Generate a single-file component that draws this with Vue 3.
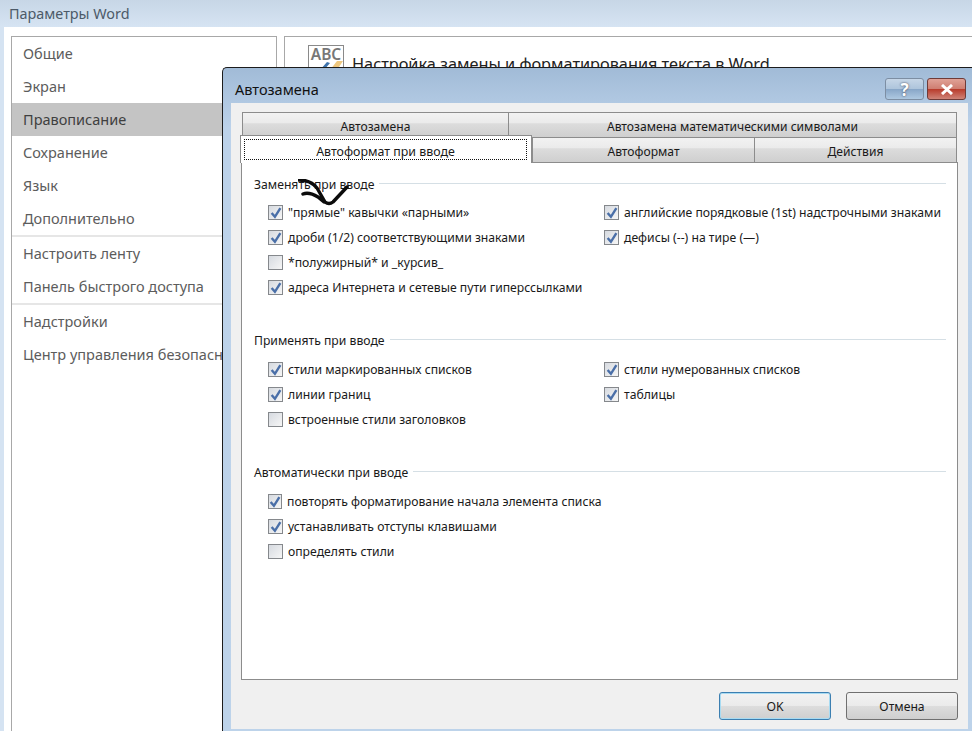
<script setup>
const nav = [
  { items: [
    { t: 'Общие' }, { t: 'Экран' }, { t: 'Правописание', active: true },
    { t: 'Сохранение' }, { t: 'Язык' }, { t: 'Дополнительно' },
  ] },
  { items: [{ t: 'Настроить ленту' }, { t: 'Панель быстрого доступа' }] },
  { items: [{ t: 'Надстройки' }, { t: 'Центр управления безопасностью' }] },
]
const groups = [
  { title: 'Заменять при вводе', left: [
    ['"прямые" кавычки «парными»', true],
    ['дроби (1/2) соответствующими знаками', true],
    ['*полужирный* и _курсив_', false],
    ['адреса Интернета и сетевые пути гиперссылками', true],
  ], right: [
    ['английские порядковые (1st) надстрочными знаками', true],
    ['дефисы (--) на тире (—)', true],
  ] },
  { title: 'Применять при вводе', left: [
    ['стили маркированных списков', true],
    ['линии границ', true],
    ['встроенные стили заголовков', false],
  ], right: [
    ['стили нумерованных списков', true],
    ['таблицы', true],
  ] },
  { title: 'Автоматически при вводе', left: [
    ['повторять форматирование начала элемента списка', true],
    ['устанавливать отступы клавишами', true],
    ['определять стили', false],
  ], right: [] },
]
</script>

<template>
  <div class="word">
    <header class="word-title">Параметры Word</header>
    <div class="word-body">
      <nav class="nav">
        <div v-for="(g, i) in nav" :key="i" class="nav-group">
          <div v-for="it in g.items" :key="it.t" class="nav-item" :class="{ active: it.active }">{{ it.t }}</div>
        </div>
      </nav>
      <main class="pane">
        <div class="abc"><span>ABC</span>
          <svg width="34" height="12" viewBox="0 0 34 12"><path d="M6 10l3 2M10 12L17 4l3 1-6 7z" fill="#3f74ad"/><path d="M20 12l7-9h6l-6 9z" fill="#eec77e"/></svg>
        </div>
        <div class="pane-title">Настройка замены и форматирования текста в Word</div>
      </main>
    </div>

    <section class="dialog">
      <header class="dlg-title">
        <span>Автозамена</span>
        <div class="dlg-btns">
          <button class="cap help">?</button>
          <button class="cap close">
            <svg width="14" height="11" viewBox="0 0 14 11"><path d="M2 1l10 9M12 1L2 10" stroke="#fff" stroke-width="3" fill="none"/></svg>
          </button>
        </div>
      </header>
      <div class="client">
        <div class="tabs">
          <div class="tab-row first">
            <div class="tab t-a">Автозамена</div>
            <div class="tab t-b">Автозамена математическими символами</div>
          </div>
          <div class="tab-row second">
            <div class="tab active-tab"><span class="focus">Автоформат при вводе</span></div>
            <div class="tab t-c">Автоформат</div>
            <div class="tab t-d">Действия</div>
          </div>
        </div>
        <div class="panel">
          <div v-for="g in groups" :key="g.title" class="group">
            <div class="legend"><span>{{ g.title }}</span><i></i></div>
            <div class="cols">
              <div class="col">
                <label v-for="o in g.left" :key="o[0]" class="opt">
                  <span class="box"><svg v-if="o[1]" width="12" height="12" viewBox="0 0 11 11"><path d="M1.5 5.5L4.5 9 9.5 1" stroke="#4a6fa8" stroke-width="2.2" fill="none"/></svg></span>{{ o[0] }}
                </label>
              </div>
              <div class="col right">
                <label v-for="o in g.right" :key="o[0]" class="opt">
                  <span class="box"><svg v-if="o[1]" width="12" height="12" viewBox="0 0 11 11"><path d="M1.5 5.5L4.5 9 9.5 1" stroke="#4a6fa8" stroke-width="2.2" fill="none"/></svg></span>{{ o[0] }}
                </label>
              </div>
            </div>
          </div>
        </div>
        <div class="actions">
          <button class="btn ok">OK</button>
          <button class="btn">Отмена</button>
        </div>
      </div>
    </section>

    <svg class="scribble" width="60" height="34" viewBox="0 0 60 34">
      <path d="M1 1C8 1 15 4 19 9L27 23Q31 26 35 23L49 8M5 15C10 13 15 15 20 18L26 23" stroke="#0b0b0b" stroke-width="3.4" fill="none" stroke-linecap="round" stroke-linejoin="round"/>
    </svg>
  </div>
</template>

<style>
html, body { margin: 0; background: #fff; }
</style>

<style scoped>
.word {
  position: relative; width: 972px; height: 731px; overflow: hidden;
  background: #d5e3f2; font-family: "Noto Sans", "Open Sans", sans-serif;
  display: flex; flex-direction: column;
}
.word-title {
  height: 27px; line-height: 28px; padding-left: 9px; font-size: 14.4px; color: #4c5a68;
  background: linear-gradient(#c7d6e6, #d6e4f3);
}
.word-body {
  flex: 1; background: #fff; margin-left: 4px; padding: 9px 0 0 7px;
  display: flex; gap: 7px; min-height: 0;
}
.nav { width: 264px; border: 1px solid #a8a8a8; border-bottom: 0; }
.nav-group + .nav-group { border-top: 2px solid #e6e6e6; }
.nav-item {
  height: 33px; line-height: 33px; padding-left: 11px; font-size: 14.5px; color: #5c5c5c; white-space: nowrap;
}
.nav-item.active { background: #c4c4c4; color: #3f3f3f; }
.pane { flex: 1; border: 1px solid #a8a8a8; border-right: 0; border-bottom: 0; position: relative; padding: 8px 0 0 23px; display: flex; gap: 8px; }
.abc { width: 34px; height: 21px; border: 1px solid #8a8a8a; position: relative; box-sizing: content-box; flex: none; }
.abc span { display: block; font-size: 15.5px; line-height: 17px; font-weight: 600; color: #777; text-align: center; }
.abc svg { position: absolute; left: 1px; top: 12px; }
.pane-title { font-size: 16.3px; color: #222; margin-top: 8px; white-space: nowrap; }

.dialog {
  position: absolute; left: 222px; top: 67px; width: 760px; height: 670px;
  border: 1px solid #1c1c1c; border-radius: 5px 0 0 0; border-right: 0;
  background: linear-gradient(#a1bbd7 0, #bcd2ea 60px, #bdd3ea 100%);
  box-sizing: border-box;
}
.dlg-title {
  height: 35px; padding: 0 4px 0 12px; display: flex; align-items: center; justify-content: space-between;
  font-size: 14.5px; color: #111; position: relative; width: 734px;
}
.dlg-title > span { margin-top: 7px; }
.dlg-btns { position: absolute; right: 7px; top: 10px; display: flex; gap: 3px; }
.cap { height: 22px; padding: 0; border-radius: 3px; display: flex; align-items: center; justify-content: center; box-sizing: border-box; }
.help {
  width: 39px; border: 1px solid #7d8ea3; color: #fff; font: 700 17px "Noto Sans", sans-serif;
  background: linear-gradient(#c6d6e7 0, #aec5dc 48%, #87a5c7 50%, #aec8e1 100%);
  text-shadow: 0 0 2px #334;
}
.close {
  width: 39px; border: 1px solid #6f3b38;
  background: linear-gradient(#e0a297 0, #cf7f72 48%, #b83a2a 50%, #cf8478 100%);
}
.client {
  position: absolute; left: 8px; top: 35px; width: 737px; height: 626px; background: #f0f0f0;
  padding: 9px 0 0 10px; box-sizing: border-box;
}
.tabs { width: 715px; margin-left: 1px; }
.tab-row { display: flex; height: 25px; }
.tab {
  box-sizing: border-box; height: 25px; line-height: 27px; text-align: center; font-size: 12.1px; color: #1a1a1a;
  border: 1px solid #8c8c8c; border-bottom: 0; border-right-width: 0;
  background: linear-gradient(#f2f2f2 0, #ebebeb 40%, #dcdcdc 45%, #cfcfcf 100%);
}
.tab:last-child { border-right-width: 1px; }
.t-a { width: 266px; }
.t-b { flex: 1; }
.t-c { width: 222px; }
.t-d { flex: 1; }
.active-tab {
  width: 292px; background: #fff; margin: -2px 0 0 -2px; height: 28px; position: relative; z-index: 1;
  border-right-width: 1px; padding: 3px 4px 0 3px; font-size: 12.4px;
}
.focus { display: block; height: 21px; line-height: 24px; border: 1px dotted #111; box-sizing: border-box; }
.panel {
  width: 717px; height: 518px; box-sizing: border-box; background: #fff;
  border: 1px solid #8c8c8c; padding: 13px 11px 0 12px;
}
.group { height: 156px; }
.group + .group { height: 132px; }
.legend { display: flex; align-items: center; gap: 5px; height: 16px; font-size: 12.2px; color: #1a1a1a; }
.legend i { flex: 1; height: 1px; background: #d5dfe5; margin-top: -2px; }
.cols { display: flex; margin-top: 8px; }
.group + .group .cols { margin-top: 9px; }
.col { width: 336px; }
.col.right { flex: 1; }
.opt { display: flex; align-items: center; height: 25px; font-size: 12.2px; color: #1a1a1a; white-space: nowrap; }
.box {
  width: 13px; height: 13px; margin: 0 5px 0 14px; border: 1px solid #85888c; box-sizing: content-box;
  background: linear-gradient(135deg, #d6dae0, #f6f6f6); display: flex; align-items: center; justify-content: center;
}
.actions { display: flex; justify-content: flex-end; gap: 15px; margin-top: 12px; width: 717px; }
.btn {
  width: 112px; height: 28px; padding: 0; border: 1px solid #707070; border-radius: 3px;
  font: 12.2px "Noto Sans", sans-serif; color: #1a1a1a;
  background: linear-gradient(#f2f2f2 0, #ebebeb 48%, #dddddd 50%, #cfcfcf 100%);
}
.btn.ok { border-color: #3c7fb1; box-shadow: inset 0 0 0 1px #a8dbf2; }
.scribble { position: absolute; left: 298px; top: 179px; }
</style>
